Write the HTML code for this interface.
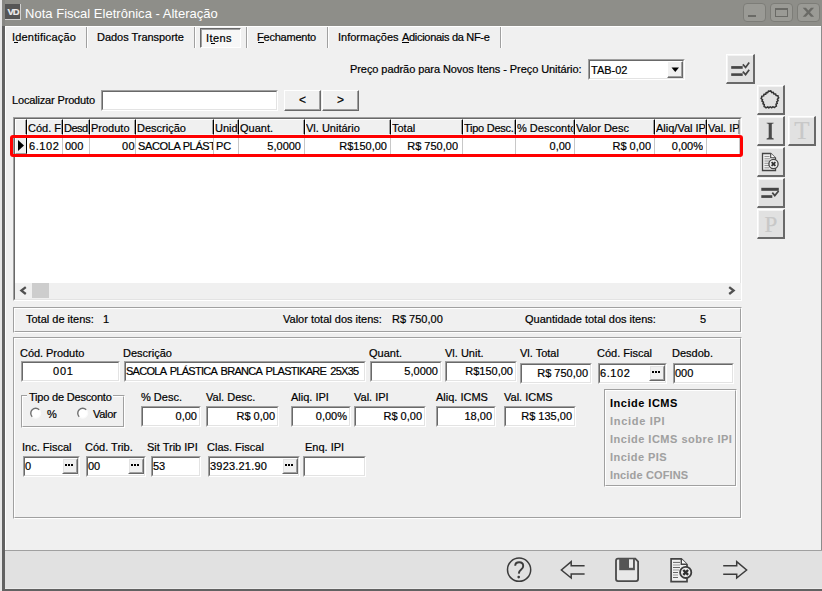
<!DOCTYPE html>
<html><head><meta charset="utf-8">
<style>
*{margin:0;padding:0;box-sizing:border-box}
html,body{width:822px;height:591px;overflow:hidden;background:#e6e6e6;position:relative}
body{font-family:"Liberation Sans",sans-serif;font-size:11px;color:#000;-webkit-text-stroke:0.2px currentColor}
.a{position:absolute}
.t{position:absolute;font-size:11px;line-height:13px;white-space:nowrap}
.u{text-decoration:underline;text-underline-offset:1px}
.in{position:absolute;background:#fff;border-top:1px solid #a0a0a0;border-left:1px solid #a0a0a0;border-right:1px solid #fff;border-bottom:1px solid #fff}
.in::before{content:"";position:absolute;left:0;top:0;right:0;bottom:0;border-top:1px solid #696969;border-left:1px solid #696969;border-right:1px solid #e3e3e3;border-bottom:1px solid #e3e3e3}
.v{position:absolute;top:3px;left:1px;right:3px;line-height:13px;white-space:nowrap}
.r{text-align:right}
.btn{position:absolute;background:#f0f0f0;border-top:1px solid #fff;border-left:1px solid #fff;border-right:1px solid #696969;border-bottom:1px solid #696969}
.btn::before{content:"";position:absolute;left:0;top:0;right:0;bottom:0;border-right:1px solid #a0a0a0;border-bottom:1px solid #a0a0a0}
.tb{position:absolute;background:#e1e1e1;border-top:1px solid #fff;border-left:1px solid #fff;border-right:2px solid #696969;border-bottom:2px solid #696969}
.tb::before{content:"";position:absolute;left:0;top:0;right:0;bottom:0;border-top:1px solid #f4f4f4;border-left:1px solid #f4f4f4}
.etch{position:absolute;border-top:1px solid #a0a0a0;border-left:1px solid #a0a0a0;border-right:1px solid #fff;border-bottom:1px solid #fff}
.etch::before{content:"";position:absolute;left:0;top:0;right:0;bottom:0;border-top:1px solid #fff;border-left:1px solid #fff;border-right:1px solid #a0a0a0;border-bottom:1px solid #a0a0a0}
.dots{position:absolute;background:#f0f0f0;border-top:1px solid #fff;border-left:1px solid #fff;border-right:1px solid #696969;border-bottom:1px solid #696969}
.dots::before{content:"";position:absolute;left:0;top:0;right:0;bottom:0;border-top:1px solid #e3e3e3;border-left:1px solid #e3e3e3;border-right:1px solid #a0a0a0;border-bottom:1px solid #a0a0a0}
.dots i{position:absolute;width:2px;height:2px;background:#000}
.sep{position:absolute;width:2px;background:#a0a0a0;border-right:1px solid #fff}
.gh{position:absolute;line-height:13px;white-space:nowrap;overflow:hidden}
.gd{position:absolute;line-height:13px;white-space:nowrap;overflow:hidden}
.bold{font-weight:bold;-webkit-text-stroke:0.05px currentColor}
.dis{color:#a0a0a0}
.serif{font-family:"Liberation Serif",serif}
</style></head><body>
<div class="a" style="left:2px;top:0;width:820px;height:591px;background:#626262"></div>
<div class="a" style="left:2px;top:0;width:820px;height:26px;background:#8e8e89"></div>
<div class="a" style="left:2px;top:0;width:3px;height:26px;background:#878783"></div>
<div class="a" style="left:5px;top:4px;width:16px;height:16px;background:#555;border-right:1px solid #d0d0d0;border-bottom:1px solid #d0d0d0;color:#eee;font-size:9.5px;font-weight:bold;line-height:16px;text-align:center;letter-spacing:-1px;padding-left:1px">VD</div>
<div class="t" style="left:25px;top:6px;letter-spacing:0.02px;font-size:13px;line-height:15px;color:#fff;-webkit-text-stroke:0">Nota Fiscal Eletrônica - Alteração</div>
<div class="a" style="left:743px;top:3px;width:23px;height:19px;border:1px solid #7d7d78;border-radius:4px;background:#9a9a95"></div>
<div class="a" style="left:770px;top:3px;width:23px;height:19px;border:1px solid #7d7d78;border-radius:4px;background:#9a9a95"></div>
<div class="a" style="left:797px;top:3px;width:23px;height:19px;border:1px solid #7d7d78;border-radius:4px;background:#9a9a95"></div>
<div class="a" style="left:748px;top:15px;width:8px;height:2px;background:#6a6a66"></div>
<div class="a" style="left:775px;top:8px;width:13px;height:9px;border:1px solid #6a6a66;border-top-width:2px"></div>
<svg class="a" style="left:797px;top:3px" width="23" height="19"><path d="M5.7 4.8 H8.9 L11.4 7.6 L13.9 4.8 H17.1 L13 9.3 L17.1 13.8 H13.9 L11.4 11 L8.9 13.8 H5.7 L9.8 9.3 Z" fill="#6a6a66"/></svg>
<div class="a" style="left:5px;top:26px;width:816px;height:524px;background:#f0f0f0;border-top:1px solid #fff;border-left:1px solid #fff"></div>
<div class="a" style="left:821px;top:26px;width:1px;height:524px;background:#8c8c8c"></div>
<div class="a" style="left:5px;top:550px;width:817px;height:39px;background:#e1e1e1;border-top:1px solid #a0a0a0;border-bottom:1px solid #ebebeb"></div>
<div class="t" style="left:12px;top:31px;letter-spacing:0.18px;">Identificação</div>
<div class="a" style="left:14px;top:42px;width:4px;height:1px;background:#000"></div>
<div class="sep" style="left:86px;top:27px;height:21px"></div>
<div class="t" style="left:97px;top:31px;letter-spacing:-0.03px;">Dados Transporte</div>
<div class="sep" style="left:194px;top:27px;height:21px"></div>
<div class="a" style="left:200px;top:28px;width:41px;height:20px;background:#f7f7f7;border-top:1px solid #696969;border-left:1px solid #696969;border-right:1px solid #fff;border-bottom:1px solid #fff"></div>
<div class="a" style="left:201px;top:29px;width:39px;height:18px;border-top:1px solid #a0a0a0;border-left:1px solid #a0a0a0"></div>
<div class="t" style="left:206px;top:32px;letter-spacing:0.4px;">Itens</div>
<div class="a" style="left:211px;top:43px;width:4px;height:1px;background:#000"></div>
<div class="sep" style="left:246px;top:27px;height:21px"></div>
<div class="t" style="left:257px;top:31px;letter-spacing:-0.22px;">Fechamento</div>
<div class="a" style="left:258px;top:42px;width:6px;height:1px;background:#000"></div>
<div class="sep" style="left:327px;top:27px;height:21px"></div>
<div class="t" style="left:338px;top:31px;letter-spacing:0px;">Informações</div>
<div class="t" style="left:402px;top:31px;letter-spacing:-0.3px;">Adicionais da NF-e</div>
<div class="a" style="left:402px;top:42px;width:7px;height:1px;background:#000"></div>
<div class="sep" style="left:500px;top:27px;height:21px"></div>
<div class="t" style="left:350px;top:63px;letter-spacing:-0.07px;">Preço padrão para Novos Itens - Preço Unitário:</div>
<div class="in" style="left:588px;top:59px;width:97px;height:21px"><div class="v" style="left:2px;top:4px">TAB-02</div></div>
<div class="btn" style="left:667px;top:61px;width:16px;height:17px"></div>
<svg class="a" style="left:671px;top:67px" width="9" height="6"><path d="M0.5 0.5 L8 0.5 L4.25 5 Z" fill="#000"/></svg>
<div class="t" style="left:12px;top:94px;letter-spacing:-0.16px;">Localizar Produto</div>
<div class="in" style="left:101px;top:90px;width:177px;height:21px"></div>
<div class="btn" style="left:284px;top:90px;width:37px;height:21px"></div>
<div class="t" style="left:299px;top:94px;letter-spacing:0px;font-size:12px">&lt;</div>
<div class="btn" style="left:322px;top:90px;width:37px;height:21px"></div>
<div class="t" style="left:337px;top:94px;letter-spacing:0px;font-size:12px">&gt;</div>
<div class="a" style="left:13px;top:117px;width:729px;height:184px;background:#fff;border-top:1px solid #a0a0a0;border-left:1px solid #a0a0a0;border-right:1px solid #fff;border-bottom:1px solid #fff"></div>
<div class="a" style="left:14px;top:118px;width:727px;height:182px;border-top:1px solid #696969;border-left:1px solid #696969;border-right:1px solid #e3e3e3;border-bottom:1px solid #e3e3e3"></div>
<div class="a" style="left:15px;top:119px;width:12px;height:16px;background:#f0f0f0;border-top:1px solid #fff;border-left:1px solid #fff;border-right:1px solid #000;border-bottom:1px solid #f6f6f6"></div>
<div class="a" style="left:25px;top:120px;width:1px;height:14px;background:#a0a0a0"></div>
<div class="a" style="left:27px;top:119px;width:36px;height:16px;background:#f0f0f0;border-top:1px solid #fff;border-left:1px solid #fff;border-right:1px solid #000;border-bottom:1px solid #f6f6f6"></div>
<div class="a" style="left:61px;top:120px;width:1px;height:14px;background:#a0a0a0"></div>
<div class="a" style="left:63px;top:119px;width:27px;height:16px;background:#f0f0f0;border-top:1px solid #fff;border-left:1px solid #fff;border-right:1px solid #000;border-bottom:1px solid #f6f6f6"></div>
<div class="a" style="left:88px;top:120px;width:1px;height:14px;background:#a0a0a0"></div>
<div class="a" style="left:90px;top:119px;width:46px;height:16px;background:#f0f0f0;border-top:1px solid #fff;border-left:1px solid #fff;border-right:1px solid #000;border-bottom:1px solid #f6f6f6"></div>
<div class="a" style="left:134px;top:120px;width:1px;height:14px;background:#a0a0a0"></div>
<div class="a" style="left:136px;top:119px;width:78px;height:16px;background:#f0f0f0;border-top:1px solid #fff;border-left:1px solid #fff;border-right:1px solid #000;border-bottom:1px solid #f6f6f6"></div>
<div class="a" style="left:212px;top:120px;width:1px;height:14px;background:#a0a0a0"></div>
<div class="a" style="left:214px;top:119px;width:25px;height:16px;background:#f0f0f0;border-top:1px solid #fff;border-left:1px solid #fff;border-right:1px solid #000;border-bottom:1px solid #f6f6f6"></div>
<div class="a" style="left:237px;top:120px;width:1px;height:14px;background:#a0a0a0"></div>
<div class="a" style="left:239px;top:119px;width:66px;height:16px;background:#f0f0f0;border-top:1px solid #fff;border-left:1px solid #fff;border-right:1px solid #000;border-bottom:1px solid #f6f6f6"></div>
<div class="a" style="left:303px;top:120px;width:1px;height:14px;background:#a0a0a0"></div>
<div class="a" style="left:305px;top:119px;width:86px;height:16px;background:#f0f0f0;border-top:1px solid #fff;border-left:1px solid #fff;border-right:1px solid #000;border-bottom:1px solid #f6f6f6"></div>
<div class="a" style="left:389px;top:120px;width:1px;height:14px;background:#a0a0a0"></div>
<div class="a" style="left:391px;top:119px;width:72px;height:16px;background:#f0f0f0;border-top:1px solid #fff;border-left:1px solid #fff;border-right:1px solid #000;border-bottom:1px solid #f6f6f6"></div>
<div class="a" style="left:461px;top:120px;width:1px;height:14px;background:#a0a0a0"></div>
<div class="a" style="left:463px;top:119px;width:53px;height:16px;background:#f0f0f0;border-top:1px solid #fff;border-left:1px solid #fff;border-right:1px solid #000;border-bottom:1px solid #f6f6f6"></div>
<div class="a" style="left:514px;top:120px;width:1px;height:14px;background:#a0a0a0"></div>
<div class="a" style="left:516px;top:119px;width:59px;height:16px;background:#f0f0f0;border-top:1px solid #fff;border-left:1px solid #fff;border-right:1px solid #000;border-bottom:1px solid #f6f6f6"></div>
<div class="a" style="left:573px;top:120px;width:1px;height:14px;background:#a0a0a0"></div>
<div class="a" style="left:575px;top:119px;width:80px;height:16px;background:#f0f0f0;border-top:1px solid #fff;border-left:1px solid #fff;border-right:1px solid #000;border-bottom:1px solid #f6f6f6"></div>
<div class="a" style="left:653px;top:120px;width:1px;height:14px;background:#a0a0a0"></div>
<div class="a" style="left:655px;top:119px;width:52px;height:16px;background:#f0f0f0;border-top:1px solid #fff;border-left:1px solid #fff;border-right:1px solid #000;border-bottom:1px solid #f6f6f6"></div>
<div class="a" style="left:705px;top:120px;width:1px;height:14px;background:#a0a0a0"></div>
<div class="a" style="left:707px;top:119px;width:33px;height:16px;background:#f0f0f0;border-top:1px solid #fff;border-left:1px solid #fff;border-right:1px solid #a0a0a0;border-bottom:1px solid #f6f6f6"></div>
<div class="a" style="left:738px;top:120px;width:1px;height:14px;background:#a0a0a0"></div>
<div class="a" style="left:15px;top:135px;width:12px;height:19px;background:#f0f0f0;border-left:1px solid #fff;border-right:1px solid #000;border-bottom:1px solid #a0a0a0"></div>
<svg class="a" style="left:18px;top:140px" width="7" height="12"><path d="M0 0 L6 5.5 L0 11 Z" fill="#000"/></svg>
<div class="a" style="left:62px;top:135px;width:1px;height:19px;background:#c8c8c8"></div>
<div class="a" style="left:89px;top:135px;width:1px;height:19px;background:#c8c8c8"></div>
<div class="a" style="left:135px;top:135px;width:1px;height:19px;background:#c8c8c8"></div>
<div class="a" style="left:213px;top:135px;width:1px;height:19px;background:#c8c8c8"></div>
<div class="a" style="left:238px;top:135px;width:1px;height:19px;background:#c8c8c8"></div>
<div class="a" style="left:304px;top:135px;width:1px;height:19px;background:#c8c8c8"></div>
<div class="a" style="left:390px;top:135px;width:1px;height:19px;background:#c8c8c8"></div>
<div class="a" style="left:462px;top:135px;width:1px;height:19px;background:#c8c8c8"></div>
<div class="a" style="left:515px;top:135px;width:1px;height:19px;background:#c8c8c8"></div>
<div class="a" style="left:574px;top:135px;width:1px;height:19px;background:#c8c8c8"></div>
<div class="a" style="left:654px;top:135px;width:1px;height:19px;background:#c8c8c8"></div>
<div class="a" style="left:706px;top:135px;width:1px;height:19px;background:#c8c8c8"></div>
<div class="a" style="left:739px;top:135px;width:1px;height:19px;background:#c8c8c8"></div>
<div class="a" style="left:27px;top:154px;width:713px;height:1px;background:#d8d8d8"></div>
<div class="gh" style="left:28px;top:122px;width:33px">Cód. Fiscal</div>
<div class="gh" style="left:64px;top:122px;width:24px"><span style="letter-spacing:-0.5px">Desdobramento</span></div>
<div class="gh" style="left:91px;top:122px;width:43px">Produto</div>
<div class="gh" style="left:137px;top:122px;width:75px">Descrição</div>
<div class="gh" style="left:215px;top:122px;width:22px">Unid.</div>
<div class="gh" style="left:240px;top:122px;width:63px">Quant.</div>
<div class="gh" style="left:306px;top:122px;width:83px">Vl. Unitário</div>
<div class="gh" style="left:392px;top:122px;width:69px">Total</div>
<div class="gh" style="left:464px;top:122px;width:51px"><span style="letter-spacing:-0.25px">Tipo Desc.</span></div>
<div class="gh" style="left:517px;top:122px;width:56px">% Desconto</div>
<div class="gh" style="left:576px;top:122px;width:77px">Valor Desc</div>
<div class="gh" style="left:656px;top:122px;width:49px">Aliq/Val IPI</div>
<div class="gh" style="left:708px;top:122px;width:31px">Val. IPI</div>
<div class="gd" style="left:29px;top:140px;width:33px;letter-spacing:0.6px">6.102</div>
<div class="gd" style="left:65px;top:140px;width:24px;letter-spacing:0px">000</div>
<div class="gd" style="left:90px;top:140px;width:45px;text-align:right;letter-spacing:0.4px">00</div>
<div class="gd" style="left:138px;top:140px;width:75px;letter-spacing:-0.35px">SACOLA PLÁSTICA BRANCA</div>
<div class="gd" style="left:216px;top:140px;width:22px;letter-spacing:0px">PC</div>
<div class="gd" style="left:239px;top:140px;width:62px;text-align:right;letter-spacing:0px">5,0000</div>
<div class="gd" style="left:305px;top:140px;width:82px;text-align:right;letter-spacing:0px">R$150,00</div>
<div class="gd" style="left:391px;top:140px;width:67px;text-align:right;letter-spacing:0px">R$ 750,00</div>
<div class="gd" style="left:516px;top:140px;width:55px;text-align:right;letter-spacing:0px">0,00</div>
<div class="gd" style="left:575px;top:140px;width:76px;text-align:right;letter-spacing:0px">R$ 0,00</div>
<div class="gd" style="left:655px;top:140px;width:48px;text-align:right;letter-spacing:0px">0,00%</div>
<div class="a" style="left:10px;top:135px;width:733px;height:22px;border:3px solid #ff0000;border-radius:3px"></div>
<div class="a" style="left:15px;top:283px;width:726px;height:16px;background:#f0f0f0"></div>
<div class="a" style="left:32px;top:283px;width:17px;height:15px;background:#cdcdcd"></div>
<svg class="a" style="left:19px;top:286px" width="9" height="9"><path d="M6.8 1.2 L2.4 4.6 L6.8 8" stroke="#505050" stroke-width="2.3" fill="none"/></svg>
<svg class="a" style="left:727px;top:286px" width="9" height="9"><path d="M2.2 1.2 L6.6 4.6 L2.2 8" stroke="#505050" stroke-width="2.3" fill="none"/></svg>
<div class="etch" style="left:13px;top:307px;width:729px;height:26px"></div>
<div class="t" style="left:26px;top:313px;letter-spacing:0px;">Total de itens:</div>
<div class="t" style="left:103px;top:313px;letter-spacing:0px;">1</div>
<div class="t" style="left:283px;top:313px;letter-spacing:0px;">Valor total dos itens:</div>
<div class="t" style="left:392px;top:313px;letter-spacing:0px;">R$ 750,00</div>
<div class="t" style="left:525px;top:313px;letter-spacing:0px;">Quantidade total dos itens:</div>
<div class="t" style="left:700px;top:313px;letter-spacing:0px;">5</div>
<div class="etch" style="left:13px;top:337px;width:729px;height:182px"></div>
<div class="t" style="left:20px;top:347px;letter-spacing:-0.05px;">Cód. Produto</div>
<div class="in" style="left:21px;top:361px;width:99px;height:21px"><div class="v" style="letter-spacing:0.8px;left:31px">001</div></div>
<div class="t" style="left:123px;top:347px;letter-spacing:0px;">Descrição</div>
<div class="in" style="left:124px;top:361px;width:242px;height:21px"><div class="v" style="letter-spacing:-0.72px;word-spacing:1.7px">SACOLA PLÁSTICA BRANCA PLASTIKARE 25X35</div></div>
<div class="t" style="left:369px;top:347px;letter-spacing:0px;">Quant.</div>
<div class="in" style="left:370px;top:361px;width:72px;height:21px"><div class="v r" style="letter-spacing:0px;">5,0000</div></div>
<div class="t" style="left:445px;top:347px;letter-spacing:0px;">Vl. Unit.</div>
<div class="in" style="left:445px;top:361px;width:72px;height:21px"><div class="v r" style="letter-spacing:0px;">R$150,00</div></div>
<div class="t" style="left:520px;top:347px;letter-spacing:0px;">Vl. Total</div>
<div class="in" style="left:520px;top:363px;width:72px;height:21px"><div class="v r" style="letter-spacing:0px;">R$ 750,00</div></div>
<div class="t" style="left:597px;top:347px;letter-spacing:0px;">Cód. Fiscal</div>
<div class="in" style="left:598px;top:363px;width:69px;height:21px"><div class="v" style="letter-spacing:0.6px;">6.102</div></div>
<div class="dots" style="left:649px;top:365px;width:16px;height:16px"><i style="left:2px;top:5px"></i><i style="left:5px;top:5px"></i><i style="left:8px;top:5px"></i></div>
<div class="t" style="left:672px;top:347px;letter-spacing:0px;">Desdob.</div>
<div class="in" style="left:673px;top:363px;width:61px;height:21px"><div class="v" style="letter-spacing:0px;">000</div></div>
<div class="etch" style="left:21px;top:395px;width:104px;height:33px"></div>
<div class="a" style="left:27px;top:391px;width:86px;height:8px;background:#f0f0f0"></div>
<div class="t" style="left:29px;top:391px;letter-spacing:-0.2px;">Tipo de Desconto</div>
<svg class="a" style="left:30px;top:407px" width="12" height="12"><circle cx="5.7" cy="6.2" r="4.9" fill="#fff" stroke="#fafafa" stroke-width="1.2"/><path d="M2.2 9.7 A4.9 4.9 0 0 1 9.2 2.7" fill="none" stroke="#6e6e6e" stroke-width="1.4"/></svg>
<svg class="a" style="left:77px;top:407px" width="12" height="12"><circle cx="5.7" cy="6.2" r="4.9" fill="#fff" stroke="#fafafa" stroke-width="1.2"/><path d="M2.2 9.7 A4.9 4.9 0 0 1 9.2 2.7" fill="none" stroke="#6e6e6e" stroke-width="1.4"/></svg>
<div class="t" style="left:47px;top:408px;letter-spacing:0px;">%</div>
<div class="t" style="left:93px;top:408px;letter-spacing:-0.3px;">Valor</div>
<div class="t" style="left:141px;top:391px;letter-spacing:0px;">% Desc.</div>
<div class="in" style="left:141px;top:406px;width:60px;height:21px"><div class="v r" style="letter-spacing:0px;">0,00</div></div>
<div class="t" style="left:206px;top:391px;letter-spacing:0px;">Val. Desc.</div>
<div class="in" style="left:206px;top:406px;width:73px;height:21px"><div class="v r" style="letter-spacing:0px;">R$ 0,00</div></div>
<div class="t" style="left:291px;top:391px;letter-spacing:0px;">Aliq. IPI</div>
<div class="in" style="left:291px;top:406px;width:60px;height:21px"><div class="v r" style="letter-spacing:0px;">0,00%</div></div>
<div class="t" style="left:354px;top:391px;letter-spacing:0px;">Val. IPI</div>
<div class="in" style="left:354px;top:406px;width:72px;height:21px"><div class="v r" style="letter-spacing:0px;">R$ 0,00</div></div>
<div class="t" style="left:436px;top:391px;letter-spacing:0px;">Aliq. ICMS</div>
<div class="in" style="left:436px;top:406px;width:60px;height:21px"><div class="v r" style="letter-spacing:0px;">18,00</div></div>
<div class="t" style="left:504px;top:391px;letter-spacing:0px;">Val. ICMS</div>
<div class="in" style="left:504px;top:406px;width:72px;height:21px"><div class="v r" style="letter-spacing:0px;">R$ 135,00</div></div>
<div class="etch" style="left:604px;top:389px;width:133px;height:98px"></div>
<div class="t bold" style="left:610px;top:397px;letter-spacing:0.5px;">Incide ICMS</div>
<div class="t bold dis" style="left:610px;top:415px;letter-spacing:0.7px;">Incide IPI</div>
<div class="t bold dis" style="left:610px;top:433px;letter-spacing:0.5px;">Incide ICMS sobre IPI</div>
<div class="t bold dis" style="left:610px;top:451px;letter-spacing:0.45px;">Incide PIS</div>
<div class="t bold dis" style="left:610px;top:469px;letter-spacing:0.15px;">Incide COFINS</div>
<div class="t" style="left:22px;top:441px;letter-spacing:0px;">Inc. Fiscal</div>
<div class="in" style="left:23px;top:456px;width:57px;height:21px"><div class="v" style="letter-spacing:0px;">0</div></div>
<div class="dots" style="left:62px;top:458px;width:16px;height:16px"><i style="left:2px;top:5px"></i><i style="left:5px;top:5px"></i><i style="left:8px;top:5px"></i></div>
<div class="t" style="left:85px;top:441px;letter-spacing:0px;">Cód. Trib.</div>
<div class="in" style="left:86px;top:456px;width:60px;height:21px"><div class="v" style="letter-spacing:0px;">00</div></div>
<div class="dots" style="left:128px;top:458px;width:16px;height:16px"><i style="left:2px;top:5px"></i><i style="left:5px;top:5px"></i><i style="left:8px;top:5px"></i></div>
<div class="t" style="left:147px;top:441px;letter-spacing:0px;">Sit Trib IPI</div>
<div class="in" style="left:151px;top:456px;width:50px;height:21px"><div class="v" style="letter-spacing:0px;">53</div></div>
<div class="t" style="left:207px;top:441px;letter-spacing:0px;">Clas. Fiscal</div>
<div class="in" style="left:208px;top:456px;width:92px;height:21px"><div class="v" style="letter-spacing:0.2px;">3923.21.90</div></div>
<div class="dots" style="left:282px;top:458px;width:16px;height:16px"><i style="left:2px;top:5px"></i><i style="left:5px;top:5px"></i><i style="left:8px;top:5px"></i></div>
<div class="t" style="left:305px;top:441px;letter-spacing:0px;">Enq. IPI</div>
<div class="in" style="left:303px;top:456px;width:63px;height:21px"><div class="v" style="letter-spacing:0px;"></div></div>
<div class="tb" style="left:726px;top:54px;width:29px;height:30px"></div>
<svg class="a" style="left:726px;top:54px" width="29" height="30"><g fill="#454545"><rect x="5.2" y="12.1" width="11.5" height="2.7"/><rect x="5.2" y="19.3" width="11.5" height="2.6"/></g><g stroke="#454545" stroke-width="1.7" fill="none"><path d="M16.8 10.4 L19.6 13.4 L23.2 8.6"/><path d="M16.8 17.6 L19.6 20.6 L23.2 15.8"/></g></svg>
<div class="tb" style="left:757px;top:85px;width:28px;height:30px"></div>
<svg class="a" style="left:757px;top:85px" width="28" height="30"><path d="M12.70 6.21 L13.85 5.82 L14.80 7.62 L16.29 7.32 L16.89 9.03 L18.71 8.95 L18.99 10.45 L21.01 10.65 L21.08 11.86 L21.81 12.83 L20.38 14.29 L21.13 15.61 L19.69 16.72 L20.33 18.42 L18.99 19.15 L19.43 21.13 L18.29 21.58 L17.59 22.57 L15.77 21.67 L14.74 22.78 L13.24 21.75 L11.82 22.89 L10.72 21.84 L8.96 22.87 L8.19 21.93 L7.03 21.57 L7.33 19.55 L5.94 18.92 L6.46 17.18 L4.95 16.18 L5.60 14.80 L4.08 13.45 L4.73 12.43 L4.72 11.21 L6.72 10.87 L6.90 9.36 L8.72 9.32 L9.20 7.57 L10.71 7.76 L11.52 5.90 Z" fill="none" stroke="#333" stroke-width="1.5" stroke-linejoin="round"/></svg>
<div class="tb" style="left:757px;top:116px;width:28px;height:30px"></div>
<svg class="a" style="left:757px;top:116px" width="28" height="30"><g fill="#4a4a4a"><path d="M9.6 6.7 H16.7 V7.3 Q15 7.6 14.8 8.3 V21.6 Q15 22.3 16.7 22.6 V23.4 H9.6 V22.6 Q11.4 22.3 11.7 21.6 V8.3 Q11.4 7.6 9.6 7.3 Z"/></g></svg>
<div class="tb" style="left:788px;top:116px;width:28px;height:30px"></div>
<div class="a serif" style="left:788px;top:116px;width:28px;height:30px;font-size:25px;line-height:30px;text-align:center;color:#c8c8c8">T</div>
<div class="tb" style="left:757px;top:147px;width:28px;height:30px"></div>
<svg class="a" style="left:757px;top:147px" width="28" height="30"><path d="M5.5 6.5 H13.7 L18.5 11 V23.5 H5.5 Z" fill="#eeeeee" stroke="#444" stroke-width="1.3"/><path d="M13.7 6.5 V10.8 H18.5" fill="#fff" stroke="#444" stroke-width="1.1"/><g stroke="#8a8a8a" stroke-width="0.9"><path d="M7.5 9.5 H12.5 M7.5 11.8 H13 M7.5 14 H12.5 M7.5 16.3 H12 M7.5 18.5 H12 M7.5 20.8 H12"/></g><circle cx="16.5" cy="17" r="4.6" fill="#eeeeee" stroke="#444" stroke-width="1.3"/><path d="M14.6 15.1 L18.4 18.9 M18.4 15.1 L14.6 18.9" stroke="#333" stroke-width="1.8"/></svg>
<div class="tb" style="left:757px;top:178px;width:28px;height:30px"></div>
<svg class="a" style="left:757px;top:178px" width="28" height="30"><g fill="#454545"><rect x="4.3" y="9.8" width="17.5" height="3"/><rect x="4.3" y="17.2" width="11" height="2.7"/></g><path d="M15.3 14.6 L17.8 17.6 L21.6 13" stroke="#454545" stroke-width="1.7" fill="none"/></svg>
<div class="tb" style="left:757px;top:209px;width:28px;height:30px"></div>
<div class="a serif" style="left:757px;top:210px;width:28px;height:30px;font-size:23px;line-height:30px;text-align:center;color:#c8c8c8">P</div>
<svg class="a" style="left:500px;top:552px" width="300" height="36"><g fill="none" stroke="#3c3c3c" stroke-width="1.5" stroke-linejoin="miter"><circle cx="19.1" cy="17.7" r="11.6"/><path d="M84.6 13.8 H71.2 V9.7 L61.4 18 L71.2 26 V22 H84.6"/><path d="M223.2 13.8 H236.7 V9.7 L246.6 18 L236.7 26 V22.2 H223.2"/></g><path d="M15.2 13.8 Q15.2 10.3 19.2 10.3 Q23.2 10.3 23.2 13.9 Q23.2 16 21.2 17.6 Q19 19.3 18.8 21.6" fill="none" stroke="#3c3c3c" stroke-width="1.9"/><circle cx="18.7" cy="25.1" r="1.3" fill="#3c3c3c"/><path d="M116 8.7 Q116 6.7 118 6.7 L135.3 6.7 L138.1 9.5 L138.1 27.1 Q138.1 29.1 136.1 29.1 L118 29.1 Q116 29.1 116 27.1 Z" fill="#e8e8e8" stroke="#4a4a4a" stroke-width="1.8"/><rect x="119.2" y="6.5" width="15.7" height="11.7" fill="#555"/><rect x="129" y="7.3" width="4" height="8.5" fill="#e8e8e8"/><path d="M171.1 6.9 L181.3 6.9 L187 12.6 L187 29.6 L171.1 29.6 Z" fill="#f0f0f0" stroke="#444" stroke-width="1.7"/><path d="M181.3 6.9 V12.3 H187" fill="#fff" stroke="#444" stroke-width="1.4"/><g stroke-width="1"><path d="M173 10.4 H180 M173 15.5 H180 M173 20.5 H178 M173 25.5 H178" stroke="#666"/><path d="M173 13 H180 M173 18 H179 M173 23 H178" stroke="#9a9a9a"/></g><circle cx="185.7" cy="20.4" r="5.6" fill="#eeeeee" stroke="#3c3c3c" stroke-width="1.8"/><path d="M183.3 18 L188.1 22.8 M188.1 18 L183.3 22.8" stroke="#2e2e2e" stroke-width="2.4"/></svg>
</body></html>
